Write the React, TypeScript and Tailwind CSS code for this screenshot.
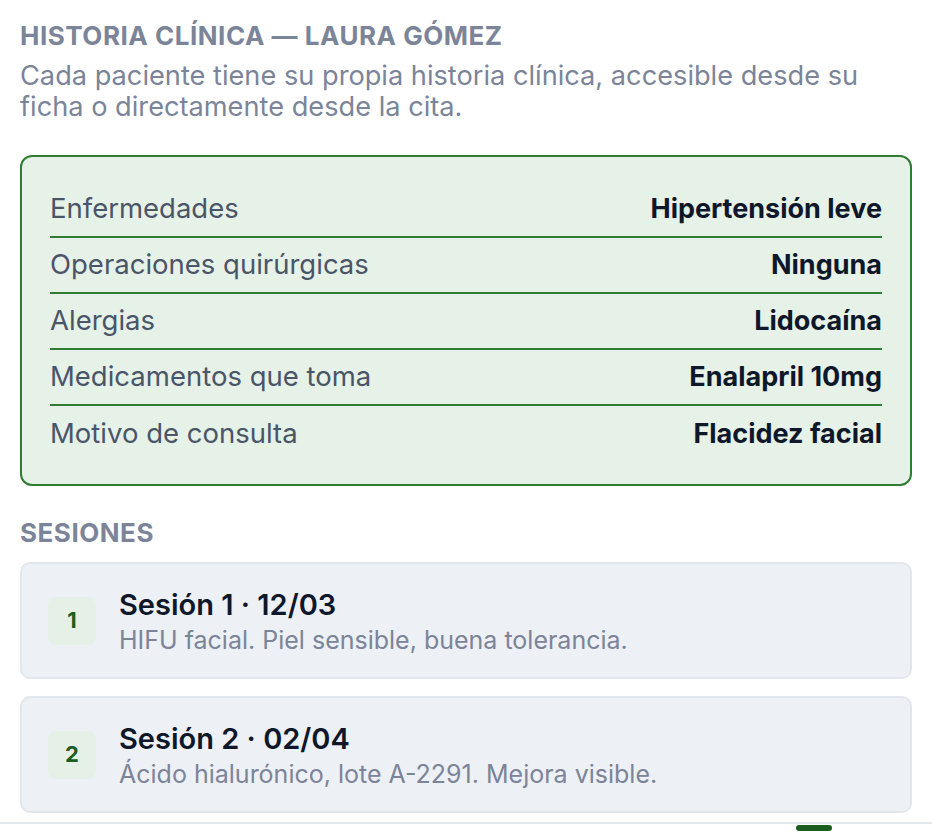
const rows = [
  { label: "Enfermedades", value: "Hipertensión leve" },
  { label: "Operaciones quirúrgicas", value: "Ninguna" },
  { label: "Alergias", value: "Lidocaína" },
  { label: "Medicamentos que toma", value: "Enalapril 10mg" },
  { label: "Motivo de consulta", value: "Flacidez facial" },
];

const sessions = [
  { n: 1, title: "Sesión 1 · 12/03", note: "HIFU facial. Piel sensible, buena tolerancia." },
  { n: 2, title: "Sesión 2 · 02/04", note: "Ácido hialurónico, lote A-2291. Mejora visible." },
];

export default function App() {
  return (
    <div className="w-[932px] h-[834px] overflow-hidden bg-white font-['Inter',sans-serif] flex flex-col">
      <div className="px-5 pt-[22px]">
        <h1 className="text-[26px] leading-7 font-bold uppercase tracking-[0.02em] text-[#7b8498]">
          Historia clínica — Laura Gómez
        </h1>
        <p className="mt-[10px] text-[27.2px] leading-[31px] text-[#7b8498]">
          Cada paciente tiene su propia historia clínica, accesible desde su ficha o directamente desde la cita.
        </p>

        {/* Ficha */}
        <div className="mt-[33px] rounded-xl border-2 border-[#2e7d32] bg-[#e6f1e7] px-[28px] pt-[25px] pb-[22px]">
          {rows.map((r, i) => (
            <div
              key={r.label}
              className={`flex items-center justify-between h-[56px] ${i < rows.length - 1 ? "border-b-2 border-[#2e7d32]" : ""}`}
            >
              <span className="text-[27.5px] text-[#4a5568]">{r.label}</span>
              <span className="text-[27px] font-bold text-[#0f172a]">{r.value}</span>
            </div>
          ))}
        </div>

        <h2 className="mt-[33px] text-[26px] leading-7 font-bold uppercase tracking-[0.02em] text-[#7b8498]">
          Sesiones
        </h2>

        <div className="mt-[15px] flex flex-col gap-[17px]">
          {sessions.map((s) => (
            <div
              key={s.n}
              className="h-[117px] rounded-[10px] border-2 border-[#e2e6ed] bg-[#edf0f5] flex items-center gap-[23px] px-[26px]"
            >
              <div className="w-12 h-12 shrink-0 rounded-lg bg-[#e5f0e7] flex items-center justify-center text-[22px] font-bold text-[#1b5e20]">
                {s.n}
              </div>
              <div className="flex flex-col">
                <span className="text-[29px] leading-[38px] font-semibold text-[#0f172a]">{s.title}</span>
                <span className="mt-[1px] text-[25px] leading-[30px] text-[#7b8498]">{s.note}</span>
              </div>
            </div>
          ))}
        </div>
      </div>

      <div className="mt-[9px] border-t-2 border-[#e2e6ed] relative h-[20px]">
        <div className="absolute left-[796px] top-[1px] w-9 h-[6px] rounded-full bg-[#1b5e20]" />
      </div>
    </div>
  );
}
